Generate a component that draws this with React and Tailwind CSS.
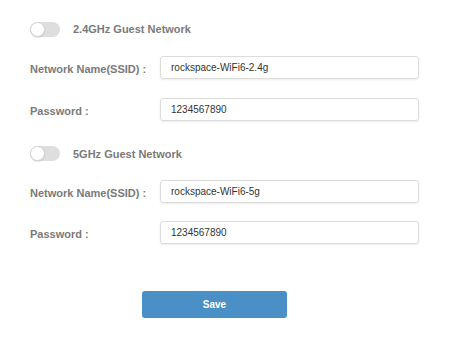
import React, { useState } from 'react';

function Toggle({ on, onClick }) {
    return (
        <button
            onClick={onClick}
            className={`relative w-[30px] h-[15px] rounded-full ${on ? 'bg-[#4a90c8]' : 'bg-[#dedede]'}`}
        >
            <span
                className={`absolute top-0 ${on ? 'left-[15px]' : 'left-0'} w-[15px] h-[15px] rounded-full bg-white border border-[#d4d4d4] shadow-[0_1px_1px_rgba(0,0,0,0.1)]`}
            />
        </button>
    );
}

function Field({ label, value, onChange }) {
    return (
        <div className="flex items-center">
            <label className="w-[130px] text-[11px] font-bold text-[#7a7a7a] pt-[4px]">{label}</label>
            <input
                value={value}
                onChange={onChange}
                className="w-[259px] h-[23px] rounded-[3px] border border-[#dcdcdc] shadow-[0_1px_2px_rgba(0,0,0,0.08)] px-[10px] text-[10px] text-[#333] outline-none"
            />
        </div>
    );
}

export default function App() {
    const [g24, setG24] = useState(false);
    const [g5, setG5] = useState(false);
    const [form, setForm] = useState({
        ssid24: 'rockspace-WiFi6-2.4g',
        pwd24: '1234567890',
        ssid5: 'rockspace-WiFi6-5g',
        pwd5: '1234567890',
    });

    const update = (name) => (e) => setForm((prev) => ({ ...prev, [name]: e.target.value }));

    return (
        <div className="w-[461px] h-[343px] bg-white pl-[30px] pt-[21px]" style={{ fontFamily: '"Liberation Sans", Arial, sans-serif' }}>
            <div className="flex items-center gap-[13px]">
                <Toggle on={g24} onClick={() => setG24(!g24)} />
                <span className="text-[11px] font-bold text-[#7a7a7a]">2.4GHz Guest Network</span>
            </div>

            <div className="mt-[18px] flex flex-col gap-[19px]">
                <Field label="Network Name(SSID) :" value={form.ssid24} onChange={update('ssid24')} />
                <Field label="Password :" value={form.pwd24} onChange={update('pwd24')} />
            </div>

            <div className="mt-[25px] flex items-center gap-[13px]">
                <Toggle on={g5} onClick={() => setG5(!g5)} />
                <span className="text-[11px] font-bold text-[#7a7a7a]">5GHz Guest Network</span>
            </div>

            <div className="mt-[18px] flex flex-col gap-[18px]">
                <Field label="Network Name(SSID) :" value={form.ssid5} onChange={update('ssid5')} />
                <Field label="Password :" value={form.pwd5} onChange={update('pwd5')} />
            </div>

            <button className="mt-[47px] ml-[112px] w-[145px] h-[27px] rounded-[3px] bg-[#4a90c6] text-white text-[10px] font-bold">
                Save
            </button>
        </div>
    );
}
